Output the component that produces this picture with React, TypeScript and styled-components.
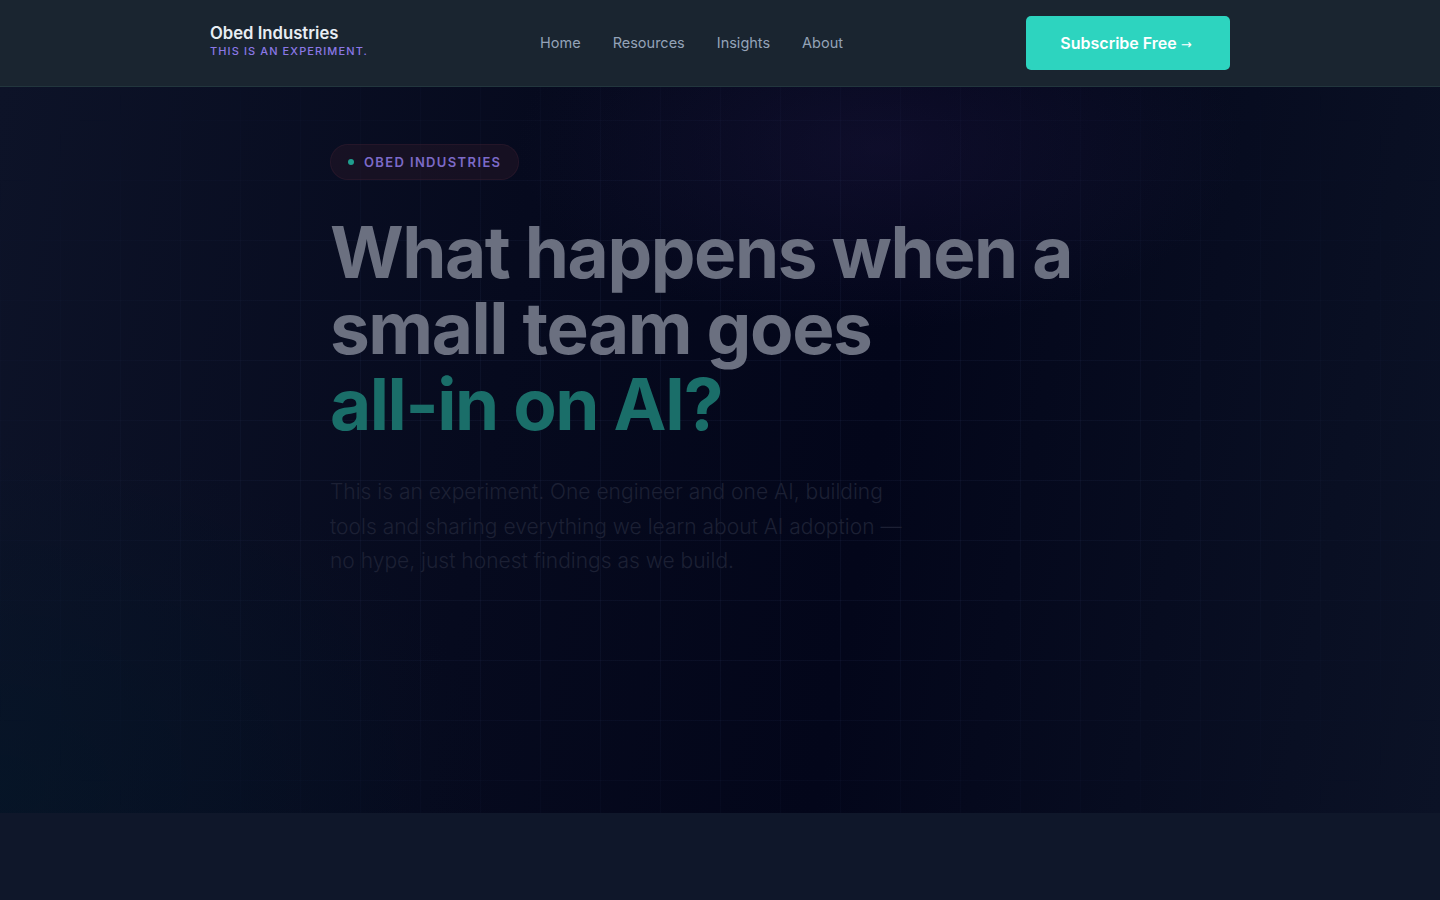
import styled, { createGlobalStyle } from "styled-components";

const GlobalStyle = createGlobalStyle`
  * { box-sizing: border-box; }
  html, body { margin: 0; padding: 0; }
  body {
    background: #0f172a;
    font-family: Inter, "Noto Sans", sans-serif;
    -webkit-font-smoothing: antialiased;
  }
`;

const Page = styled.div`
  min-height: 100vh;
  background: #0f172a;
`;

const Header = styled.header`
  height: 87px;
  background: #1a2530;
  border-bottom: 1px solid #22363d;
`;

const HeaderInner = styled.div`
  max-width: 1020px;
  height: 100%;
  margin: 0 auto;
  display: flex;
  align-items: center;
`;

const Brand = styled.a`
  display: flex;
  flex-direction: column;
  gap: 1px;
  text-decoration: none;
  width: 280px;
  margin-top: -5px;
`;

const BrandName = styled.span`
  color: #e8edf3;
  font-size: 16.7px;
  font-weight: 600;
  line-height: 20px;
`;

const BrandTag = styled.span`
  color: #8b78e6;
  font-size: 11px;
  font-weight: 500;
  letter-spacing: 0.1em;
  line-height: 14px;
`;

const Nav = styled.nav`
  display: flex;
  gap: 32px;
  margin-left: 50px;
  margin-top: -2px;
`;

const NavLink = styled.a`
  color: #94a3b8;
  font-size: 14.5px;
  text-decoration: none;
`;

const Subscribe = styled.a`
  margin-left: auto;
  width: 204px;
  height: 54px;
  border-radius: 5px;
  background: #2dd4bf;
  color: #ffffff;
  font-size: 16px;
  font-weight: 600;
  display: flex;
  align-items: center;
  justify-content: center;
  gap: 4px;
  padding-right: 4px;
  text-decoration: none;
`;

const Arrow = styled.span`
  font-family: "DejaVu Sans", sans-serif;
  font-size: 13px;
  font-weight: 400;
  margin-top: 3px;
`;

const Hero = styled.section`
  position: relative;
  height: 726px;
  overflow: hidden;
  background:
    radial-gradient(ellipse 520px 260px at 880px 60px, rgba(40, 30, 80, 0.3), transparent 70%),
    radial-gradient(ellipse 700px 500px at 0px 700px, rgba(0, 25, 40, 0.45), transparent 70%),
    linear-gradient(100deg, #0d1328 0%, #060a1e 35%, #03061a 60%, #0b1226 100%);
`;

const Grid = styled.div`
  position: absolute;
  inset: 0;
  background-image:
    linear-gradient(rgba(90, 110, 170, 0.08) 1px, transparent 1px),
    linear-gradient(90deg, rgba(90, 110, 170, 0.08) 1px, transparent 1px);
  background-size: 60px 60px;
  background-position: 0 33px;
  mask-image: radial-gradient(ellipse 60% 70% at 50% 50%, #000 40%, transparent 100%);
  pointer-events: none;
`;

const HeroInner = styled.div`
  position: relative;
  max-width: 780px;
  margin: 0 auto;
  padding-top: 57px;
`;

const Badge = styled.div`
  display: inline-flex;
  align-items: center;
  gap: 10px;
  height: 36px;
  padding: 0 17px;
  border-radius: 18px;
  background: rgba(38, 22, 38, 0.5);
  border: 1px solid rgba(80, 40, 60, 0.25);
`;

const Dot = styled.span`
  width: 6px;
  height: 6px;
  border-radius: 50%;
  background: #1f9e8e;
`;

const BadgeText = styled.span`
  color: #7c6ac8;
  font-size: 13px;
  font-weight: 600;
  letter-spacing: 0.105em;
`;

const Title = styled.h1`
  margin: 34px 0 0;
  font-size: 71px;
  font-weight: 700;
  line-height: 76px;
  letter-spacing: -0.02em;
  color: #6b7080;
  width: 820px;
`;

const Accent = styled.span`
  display: block;
  color: #1a6e69;
`;

const Lead = styled.p`
  margin: 33px 0 0;
  max-width: 580px;
  font-size: 21px;
  font-weight: 300;
  line-height: 34.5px;
  color: #1c2034;
`;

export default function App() {
  return (
    <Page>
      <GlobalStyle />
      <Header>
        <HeaderInner>
          <Brand href="#">
            <BrandName>Obed Industries</BrandName>
            <BrandTag>THIS IS AN EXPERIMENT.</BrandTag>
          </Brand>
          <Nav>
            <NavLink href="#">Home</NavLink>
            <NavLink href="#">Resources</NavLink>
            <NavLink href="#">Insights</NavLink>
            <NavLink href="#">About</NavLink>
          </Nav>
          <Subscribe href="#">
            Subscribe Free <Arrow>→</Arrow>
          </Subscribe>
        </HeaderInner>
      </Header>
      <Hero>
        <Grid />
        <HeroInner>
          <Badge>
            <Dot />
            <BadgeText>OBED INDUSTRIES</BadgeText>
          </Badge>
          <Title>
            What happens when a<br />
            small team goes
            <Accent>all-in on AI?</Accent>
          </Title>
          <Lead>
            This is an experiment. One engineer and one AI, building tools and
            sharing everything we learn about AI adoption — no hype, just honest
            findings as we build.
          </Lead>
        </HeroInner>
      </Hero>
    </Page>
  );
}
